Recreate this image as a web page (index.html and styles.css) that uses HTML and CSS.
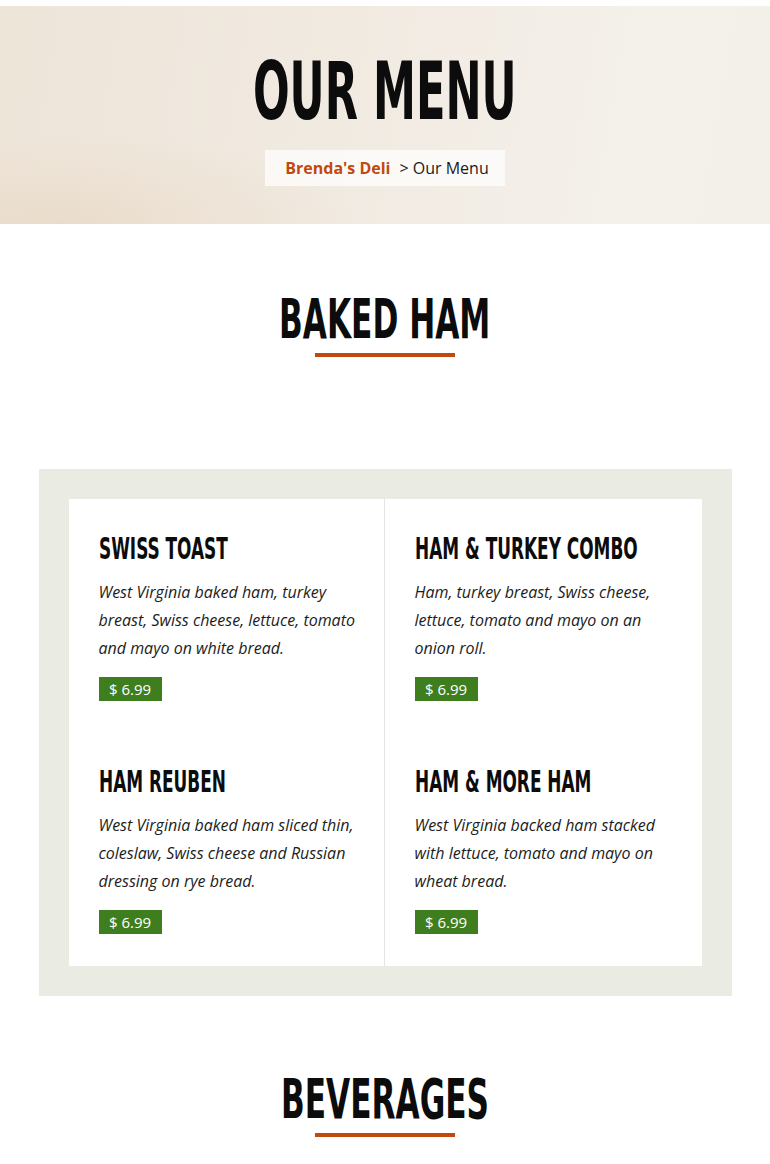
FILE: index.html
```html
<!DOCTYPE html>
<html lang="en">
<head>
<meta charset="utf-8">
<title>Our Menu - Brenda's Deli</title>
<link rel="stylesheet" href="styles.css">
</head>
<body>
<header class="hero">
  <h1 class="hero-title"><span class="display">OUR MENU</span></h1>
  <nav class="breadcrumb"><a class="crumb-home" href="#">Brenda's Deli</a><span class="crumb-sep">&gt; Our Menu</span></nav>
</header>

<section class="menu-section">
  <h2 class="section-title"><span class="display">BAKED HAM</span></h2>
  <div class="section-rule"></div>
  <div class="panel">
    <div class="menu-grid">
      <article class="item item-left">
        <h3 class="item-title"><span class="display">SWISS TOAST</span></h3>
        <p class="item-desc">West Virginia baked ham, turkey breast, Swiss cheese, lettuce, tomato and mayo on white bread.</p>
        <span class="price">$ 6.99</span>
      </article>
      <article class="item">
        <h3 class="item-title"><span class="display">HAM &amp; TURKEY COMBO</span></h3>
        <p class="item-desc">Ham, turkey breast, Swiss cheese, lettuce, tomato and mayo on an onion roll.</p>
        <span class="price">$ 6.99</span>
      </article>
      <article class="item item-left">
        <h3 class="item-title"><span class="display">HAM REUBEN</span></h3>
        <p class="item-desc">West Virginia baked ham sliced thin, coleslaw, Swiss cheese and Russian dressing on rye bread.</p>
        <span class="price">$ 6.99</span>
      </article>
      <article class="item">
        <h3 class="item-title"><span class="display">HAM &amp; MORE HAM</span></h3>
        <p class="item-desc">West Virginia backed ham stacked with lettuce, tomato and mayo on wheat bread.</p>
        <span class="price">$ 6.99</span>
      </article>
    </div>
  </div>
</section>

<section class="menu-section">
  <h2 class="section-title"><span class="display">BEVERAGES</span></h2>
  <div class="section-rule"></div>
</section>
</body>
</html>
```

FILE: styles.css
```css
* { box-sizing: border-box; }

html, body {
  margin: 0;
  padding: 0;
  background: #fff;
}

body {
  font-family: "Open Sans", "Liberation Sans", sans-serif;
  color: #111;
  overflow: hidden;
}

.hero-title,
.section-title,
.item-title {
  font-family: "Liberation Sans Narrow", "DejaVu Sans Condensed", "Liberation Sans", sans-serif;
  font-weight: 700;
  color: #0c0c0c;
}

.display {
  display: inline-block;
  transform: scaleX(0.61);
  transform-origin: center;
  white-space: nowrap;
}

/* Hero */
.hero {
  margin-top: 6px;
  height: 218px;
  padding-top: 46px;
  text-align: center;
  background:
    radial-gradient(ellipse 55% 60% at 8% 100%, rgba(228, 208, 184, 0.45), rgba(228, 208, 184, 0) 70%),
    linear-gradient(100deg, #eee5d9 0%, #f1eae1 45%, #f4f0ea 80%, #f3efe9 100%);
}

.hero-title {
  margin: 0;
  font-size: 80px;
  line-height: 80px;
}

.hero-title .display {
  transform: scaleX(0.6);
}

.breadcrumb {
  display: inline-block;
  margin-top: 18px;
  height: 36px;
  line-height: 36px;
  padding: 0 16px 0 20px;
  background: rgba(255, 255, 255, 0.72);
  font-size: 16px;
}

.crumb-home {
  color: #c0490f;
  font-weight: 700;
  text-decoration: none;
}

.crumb-sep {
  margin-left: 9px;
  color: #1a1a1a;
}

/* Sections */
.menu-section {
  padding-top: 67px;
  text-align: center;
}

.section-title {
  margin: 0;
  font-size: 55px;
  line-height: 56px;
}

.section-title .display {
  transform: scaleX(0.63);
}

.section-rule {
  width: 140px;
  height: 4px;
  margin: 6px auto 0;
  background: #c0490f;
}

.panel {
  width: 693px;
  margin: 112px auto 8px;
  padding: 30px;
  background: #eaece3;
  text-align: left;
}

.menu-grid {
  display: grid;
  grid-template-columns: 316px 316px;
  background: #fff;
}

.item {
  padding: 30px 20px 31px 30px;
}

.item:nth-child(n+3) {
  padding-bottom: 32px;
}

.item-left {
  border-right: 1px solid #e4e4e4;
}

.item-title {
  margin: 0;
  font-size: 30px;
  line-height: 39px;
}

.item-title .display {
  transform: scaleX(0.627);
  transform-origin: left center;
}

.item-desc {
  margin: 10px 0 15px;
  font-size: 16px;
  line-height: 28px;
  font-style: italic;
  color: #1c1c1c;
}

.price {
  display: block;
  width: max-content;
  height: 24px;
  line-height: 24px;
  padding: 0 10.5px;
  background: #3f7e1f;
  color: #fff;
  font-size: 15px;
}
```
